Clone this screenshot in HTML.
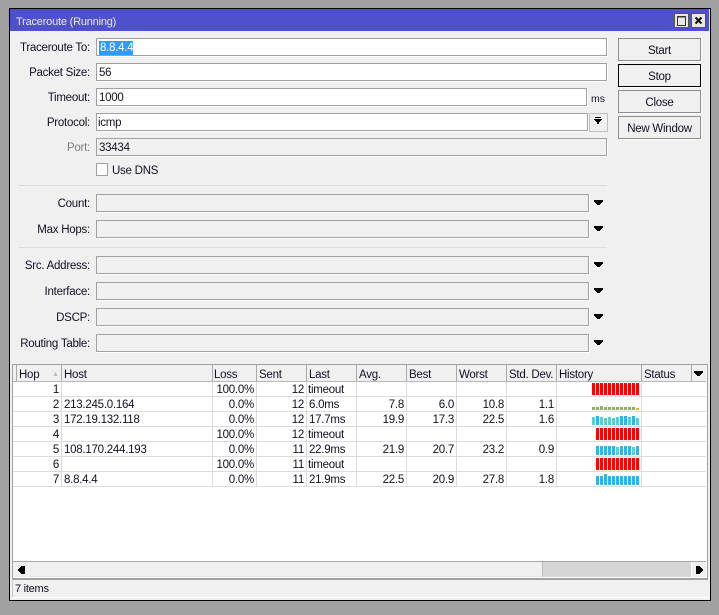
<!DOCTYPE html>
<html><head><meta charset="utf-8">
<style>
html,body{margin:0;padding:0;width:719px;height:615px;overflow:hidden;background:#a0a0a0}
body{font-family:"Liberation Sans",sans-serif;font-size:11.5px;letter-spacing:-.25px;color:#101020;position:relative}
.a,.l,.i,.b,.c,.r,.s,.v{position:absolute}
.l{left:0;width:90px;text-align:right;height:18px;line-height:20px;white-space:nowrap}
.i{left:96px;height:16px;width:509px;line-height:18px;background:#fff;border:1px solid #a0a0a0;box-shadow:1px 1px 0 #fff;padding:0;text-indent:2px;white-space:nowrap}
.e{background:#f0f0f0;width:491px}
.b{left:618px;width:81px;height:21px;border:1px solid #8c8c8c;box-shadow:1px 1px 0 #fff;text-align:center;line-height:24px;background:#f0f0f0}
.c{height:15px;line-height:18px;white-space:nowrap}
.r{text-align:right}
.h{top:365px;height:16px;line-height:20px}
.s{top:382px;width:1px;height:104px;background:#dcdcdc}
.hs{position:absolute;top:365px;width:1px;height:16px;background:#a8a8a8}
.v{left:13px;width:693px;height:1px;background:#dcdcdc}
</style></head>
<body>
<div class="a" style="left:9px;top:8px;width:700px;height:591px;border:1px solid #000;background:#f0f0f0"></div>
<div class="a" style="left:10px;top:9px;width:699px;height:22px;background:#4f50cc"></div>
<div class="a" style="left:16px;top:9px;height:25px;line-height:27px;color:#e8e8f5;font-size:11px;letter-spacing:-.2px">Traceroute (Running)</div>
<svg class="a" style="left:673px;top:12px" width="34" height="17">
<rect x="1.5" y="1.5" width="14" height="14" fill="#e8e8e8" stroke="#555"/>
<rect x="4.5" y="4.5" width="8" height="9" fill="none" stroke="#333"/><rect x="4" y="4" width="9" height="1.5" fill="#333"/>
<rect x="18.5" y="1.5" width="14" height="14" fill="#e8e8e8" stroke="#555"/>
<path d="M22.5 5.5L28.5 11.5M28.5 5.5L22.5 11.5" stroke="#111" stroke-width="2"/>
</svg>

<div class="l" style="left:0;top:38px">Traceroute To:</div>
<div class="i" style="top:38px"><span class="a" style="left:2px;top:2px;width:34px;height:14px;background:#3399ff;color:#fff;line-height:15px;text-indent:1px">8.8.4.4</span></div>
<div class="l" style="top:63px">Packet Size:</div><div class="i" style="top:63px">56</div>
<div class="l" style="top:88px">Timeout:</div><div class="i" style="top:88px;width:489px">1000</div>
<div class="a" style="left:591px;top:89px;line-height:21px;font-size:10.5px;letter-spacing:0">ms</div>
<div class="l" style="top:113px">Protocol:</div><div class="i" style="top:113px;width:490px;text-indent:1px">icmp</div>
<div class="a" style="left:589px;top:113px;width:17px;height:17px;border:1px solid #c0c0c0;background:#f0f0f0"></div>
<svg class="a" style="left:594px;top:117px" width="9" height="9"><path d="M1 0h6v1H1zM0 2h8v1H0zM1 3h6v1H1zM2 4h4v1H2zM3 5h2v2H3z" fill="#000"/></svg>
<div class="l" style="top:138px;color:#808080">Port:</div><div class="i" style="top:138px;background:#f0f0f0">33434</div>
<div class="a" style="left:96px;top:163px;width:10px;height:11px;border:1px solid #a0a0a0;background:#fff"></div>
<div class="a" style="left:112px;top:162px;line-height:18px">Use DNS</div>

<div class="a" style="left:19px;top:185px;width:588px;height:1px;background:#dcdcdc"></div>
<div class="a" style="left:19px;top:247px;width:588px;height:1px;background:#dcdcdc"></div>

<div class="l" style="top:194px">Count:</div><div class="i e" style="top:194px"></div>
<div class="l" style="top:220px">Max Hops:</div><div class="i e" style="top:220px"></div>
<div class="l" style="top:256px">Src. Address:</div><div class="i e" style="top:256px"></div>
<div class="l" style="top:282px">Interface:</div><div class="i e" style="top:282px"></div>
<div class="l" style="top:308px">DSCP:</div><div class="i e" style="top:308px"></div>
<div class="l" style="top:334px">Routing Table:</div><div class="i e" style="top:334px"></div>
<svg class="a" style="left:594px;top:200px" width="10" height="160" fill="#000">
<path d="M0 0h9v2H8v1H7v1H6v1H3V4H2V3H1V2H0z"/>
<path d="M0 26h9v2H8v1H7v1H6v1H3v-1H2v-1H1v-1H0z"/>
<path d="M0 62h9v2H8v1H7v1H6v1H3v-1H2v-1H1v-1H0z"/>
<path d="M0 88h9v2H8v1H7v1H6v1H3v-1H2v-1H1v-1H0z"/>
<path d="M0 114h9v2H8v1H7v1H6v1H3v-1H2v-1H1v-1H0z"/>
<path d="M0 140h9v2H8v1H7v1H6v1H3v-1H2v-1H1v-1H0z"/>
</svg>

<div class="b" style="top:38px">Start</div>
<div class="b" style="top:64px;border-color:#000">Stop</div>
<div class="b" style="top:90px">Close</div>
<div class="b" style="top:116px">New Window</div>

<!-- table -->
<div class="a" style="left:12px;top:364px;width:694px;height:213px;border:1px solid #a0a0a0;border-bottom:2px solid #a0a0a0;background:#fff"></div>
<div class="a" style="left:13px;top:365px;width:693px;height:16px;background:#f0f0f0"></div>
<div class="a" style="left:13px;top:381px;width:693px;height:1px;background:#b8b8b8"></div>
<div class="hs" style="left:16px"></div>
<div class="a" style="left:52px;top:371px;color:#bbb;font-size:7px;line-height:7px">▲</div>
<div class="s" style="left:61px"></div><div class="s" style="left:212px"></div><div class="s" style="left:256px"></div><div class="s" style="left:306px"></div><div class="s" style="left:356px"></div><div class="s" style="left:406px"></div><div class="s" style="left:456px"></div><div class="s" style="left:506px"></div><div class="s" style="left:556px"></div><div class="s" style="left:641px"></div>
<div class="hs" style="left:61px"></div><div class="hs" style="left:212px"></div><div class="hs" style="left:256px"></div><div class="hs" style="left:306px"></div><div class="hs" style="left:356px"></div><div class="hs" style="left:406px"></div><div class="hs" style="left:456px"></div><div class="hs" style="left:506px"></div><div class="hs" style="left:556px"></div><div class="hs" style="left:641px"></div><div class="hs" style="left:691px"></div>
<div class="c h" style="left:19px">Hop</div><div class="c h" style="left:64px">Host</div><div class="c h" style="left:214px">Loss</div><div class="c h" style="left:259px">Sent</div><div class="c h" style="left:309px">Last</div><div class="c h" style="left:359px">Avg.</div><div class="c h" style="left:409px">Best</div><div class="c h" style="left:459px">Worst</div><div class="c h" style="left:509px">Std. Dev.</div><div class="c h" style="left:559px">History</div><div class="c h" style="left:644px">Status</div>
<svg class="a" style="left:694px;top:371px" width="10" height="6"><path d="M0 0h9v2H8v1H7v1H6v1H3V4H2V3H1V2H0z" fill="#000"/></svg>

<div class="v" style="top:396px"></div><div class="v" style="top:411px"></div><div class="v" style="top:426px"></div><div class="v" style="top:441px"></div><div class="v" style="top:456px"></div><div class="v" style="top:471px"></div><div class="v" style="top:486px"></div>

<div class="c r" style="top:381px;left:20px;width:39px">1</div><div class="c r" style="top:381px;left:214px;width:40px">100.0%</div><div class="c r" style="top:381px;left:264px;width:40px">12</div><div class="c" style="top:381px;left:308px">timeout</div>

<div class="c r" style="top:396px;left:20px;width:39px">2</div><div class="c" style="top:396px;left:64px">213.245.0.164</div><div class="c r" style="top:396px;left:214px;width:40px">0.0%</div><div class="c r" style="top:396px;left:264px;width:40px">12</div><div class="c" style="top:396px;left:309px">6.0ms</div><div class="c r" style="top:396px;left:364px;width:40px">7.8</div><div class="c r" style="top:396px;left:414px;width:40px">6.0</div><div class="c r" style="top:396px;left:464px;width:40px">10.8</div><div class="c r" style="top:396px;left:514px;width:40px">1.1</div>

<div class="c r" style="top:411px;left:20px;width:39px">3</div><div class="c" style="top:411px;left:64px">172.19.132.118</div><div class="c r" style="top:411px;left:214px;width:40px">0.0%</div><div class="c r" style="top:411px;left:264px;width:40px">12</div><div class="c" style="top:411px;left:309px">17.7ms</div><div class="c r" style="top:411px;left:364px;width:40px">19.9</div><div class="c r" style="top:411px;left:414px;width:40px">17.3</div><div class="c r" style="top:411px;left:464px;width:40px">22.5</div><div class="c r" style="top:411px;left:514px;width:40px">1.6</div>

<div class="c r" style="top:426px;left:20px;width:39px">4</div><div class="c r" style="top:426px;left:214px;width:40px">100.0%</div><div class="c r" style="top:426px;left:264px;width:40px">12</div><div class="c" style="top:426px;left:308px">timeout</div>

<div class="c r" style="top:441px;left:20px;width:39px">5</div><div class="c" style="top:441px;left:64px">108.170.244.193</div><div class="c r" style="top:441px;left:214px;width:40px">0.0%</div><div class="c r" style="top:441px;left:264px;width:40px">11</div><div class="c" style="top:441px;left:309px">22.9ms</div><div class="c r" style="top:441px;left:364px;width:40px">21.9</div><div class="c r" style="top:441px;left:414px;width:40px">20.7</div><div class="c r" style="top:441px;left:464px;width:40px">23.2</div><div class="c r" style="top:441px;left:514px;width:40px">0.9</div>

<div class="c r" style="top:456px;left:20px;width:39px">6</div><div class="c r" style="top:456px;left:214px;width:40px">100.0%</div><div class="c r" style="top:456px;left:264px;width:40px">11</div><div class="c" style="top:456px;left:308px">timeout</div>

<div class="c r" style="top:471px;left:20px;width:39px">7</div><div class="c" style="top:471px;left:64px">8.8.4.4</div><div class="c r" style="top:471px;left:214px;width:40px">0.0%</div><div class="c r" style="top:471px;left:264px;width:40px">11</div><div class="c" style="top:471px;left:309px">21.9ms</div><div class="c r" style="top:471px;left:364px;width:40px">22.5</div><div class="c r" style="top:471px;left:414px;width:40px">20.9</div><div class="c r" style="top:471px;left:464px;width:40px">27.8</div><div class="c r" style="top:471px;left:514px;width:40px">1.8</div>

<svg class="a" style="left:585px;top:380px" width="60" height="110">
<g fill="#ff0000">
<rect x="7" y="3" width="3" height="12"/><rect x="11" y="3" width="3" height="12"/><rect x="15" y="3" width="3" height="12"/><rect x="19" y="3" width="3" height="12"/><rect x="23" y="3" width="3" height="12"/><rect x="27" y="3" width="3" height="12"/><rect x="31" y="3" width="3" height="12"/><rect x="35" y="3" width="3" height="12"/><rect x="39" y="3" width="3" height="12"/><rect x="43" y="3" width="3" height="12"/><rect x="47" y="3" width="3" height="12"/><rect x="51" y="3" width="3" height="12"/>
<rect x="11" y="48" width="3" height="12"/><rect x="15" y="48" width="3" height="12"/><rect x="19" y="48" width="3" height="12"/><rect x="23" y="48" width="3" height="12"/><rect x="27" y="48" width="3" height="12"/><rect x="31" y="48" width="3" height="12"/><rect x="35" y="48" width="3" height="12"/><rect x="39" y="48" width="3" height="12"/><rect x="43" y="48" width="3" height="12"/><rect x="47" y="48" width="3" height="12"/><rect x="51" y="48" width="3" height="12"/>
<rect x="11" y="78" width="3" height="12"/><rect x="15" y="78" width="3" height="12"/><rect x="19" y="78" width="3" height="12"/><rect x="23" y="78" width="3" height="12"/><rect x="27" y="78" width="3" height="12"/><rect x="31" y="78" width="3" height="12"/><rect x="35" y="78" width="3" height="12"/><rect x="39" y="78" width="3" height="12"/><rect x="43" y="78" width="3" height="12"/><rect x="47" y="78" width="3" height="12"/><rect x="51" y="78" width="3" height="12"/>
</g>
<g fill="#8ab06c">
<rect x="7" y="27" width="3" height="3"/><rect x="11" y="27" width="3" height="3"/><rect x="15" y="26" width="3" height="4"/><rect x="19" y="27" width="3" height="3"/><rect x="23" y="27" width="3" height="3"/><rect x="27" y="27" width="3" height="3"/><rect x="31" y="27" width="3" height="3"/><rect x="35" y="27" width="3" height="3"/><rect x="39" y="27" width="3" height="3"/><rect x="43" y="27" width="3" height="3"/><rect x="47" y="27" width="3" height="3"/>
</g>
<rect x="51" y="28" width="3" height="2" fill="#f5a623"/>
<g fill="#5bcfcf">
<rect x="7" y="37" width="3" height="8"/><rect x="15" y="37" width="3" height="8"/><rect x="19" y="38" width="3" height="7"/><rect x="23" y="37" width="3" height="8"/><rect x="27" y="38" width="3" height="7"/><rect x="31" y="37" width="3" height="8"/><rect x="43" y="37" width="3" height="8"/><rect x="51" y="38" width="3" height="7"/>
<rect x="31" y="67" width="3" height="8"/><rect x="47" y="67" width="3" height="8"/>
</g>
<g fill="#3bb0e5">
<rect x="11" y="36" width="3" height="9"/><rect x="35" y="36" width="3" height="9"/><rect x="39" y="36" width="3" height="9"/><rect x="47" y="36" width="3" height="9"/>
<rect x="11" y="66" width="3" height="9"/><rect x="15" y="66" width="3" height="9"/><rect x="19" y="66" width="3" height="9"/><rect x="23" y="66" width="3" height="9"/><rect x="27" y="66" width="3" height="9"/><rect x="35" y="66" width="3" height="9"/><rect x="39" y="66" width="3" height="9"/><rect x="43" y="66" width="3" height="9"/><rect x="51" y="66" width="3" height="9"/>
<rect x="11" y="96" width="3" height="9"/><rect x="15" y="96" width="3" height="9"/><rect x="19" y="94" width="3" height="11"/><rect x="23" y="96" width="3" height="9"/><rect x="27" y="96" width="3" height="9"/><rect x="31" y="96" width="3" height="9"/><rect x="35" y="96" width="3" height="9"/><rect x="39" y="96" width="3" height="9"/><rect x="43" y="96" width="3" height="9"/><rect x="47" y="96" width="3" height="9"/><rect x="51" y="96" width="3" height="9"/>
</g>
</svg>

<!-- scrollbar -->
<div class="a" style="left:13px;top:561px;width:693px;height:1px;background:#a8a8a8"></div>
<div class="a" style="left:13px;top:562px;width:693px;height:15px;background:#d6d6d6"></div>
<div class="a" style="left:13px;top:562px;width:15px;height:15px;background:#f0f0f0;border-right:1px solid #fff"></div>
<div class="a" style="left:29px;top:562px;width:513px;height:14px;background:#f0f0f0;border-right:1px solid #bbb;border-bottom:1px solid #e4e4e4"></div>
<div class="a" style="left:691px;top:562px;width:15px;height:15px;background:#f0f0f0;border-left:1px solid #fff;box-sizing:border-box"></div>
<svg class="a" style="left:18px;top:566px" width="8" height="9"><path d="M3 0h4v8H3V7H2V6H1V5H0V3h1V2h1V1h1z" fill="#000"/></svg>
<svg class="a" style="left:696px;top:566px" width="8" height="9"><path d="M0 0h4v1h1v1h1v1h1v2H6v1H5v1H4v1H0z" fill="#000"/></svg>

<div class="a" style="left:12px;top:579px;width:696px;height:18px;border-left:1px solid #c8c8c8;border-bottom:1px solid #fff"></div>
<div class="a" style="left:15px;top:580px;line-height:19px;font-size:11px">7 items</div>
</body></html>
